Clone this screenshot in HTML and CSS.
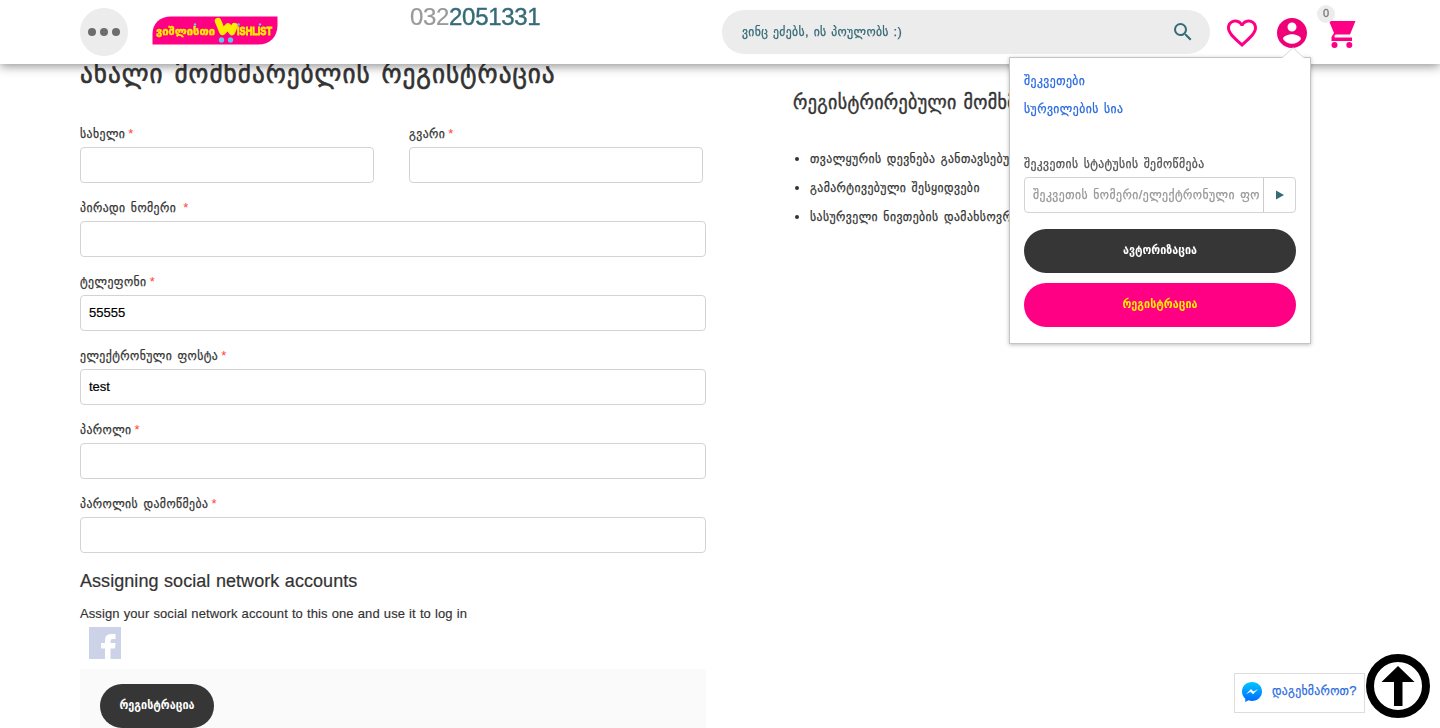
FILE: index.html
```
<!DOCTYPE html>
<html lang="ka">
<head>
<meta charset="utf-8">
<title>რეგისტრაცია</title>
<link rel="stylesheet" href="styles.css">
</head>
<body>
<header class="header">
  <button class="menu" aria-label="menu"><i></i><i></i><i></i></button>
  <svg class="logo" width="126" height="30" viewBox="0 0 126 30">
    <path d="M.5 28.500V18C.5 7 8 .5 19 .5H125.500V9C125.500 21 118 28.500 106 28.500Z" fill="#ff0084"/>
    <g fill="#ffed00" stroke="#ffed00" stroke-width=".4" font-weight="700">
      <text class="logo-ka" x="4" y="18.500" textLength="59" lengthAdjust="spacingAndGlyphs">ვიშლისთი</text>
      <text class="logo-en" x="85" y="18.500" textLength="35" lengthAdjust="spacingAndGlyphs">ISHLIST</text>
    </g>
    <path d="M66 5L70.500 16L76 10.500L80 16L82.500 10" fill="none" stroke="#ffed00" stroke-width="6.500" stroke-linecap="round" stroke-linejoin="round"/>
    <g fill="#5bc8ee"><circle cx="69.500" cy="24" r="2.700"/><circle cx="78.500" cy="24" r="2.700"/><circle cx="43" cy="8.500" r="1.200"/><circle cx="86.500" cy="8.500" r="1.300"/><circle cx="108" cy="8.500" r="1.200"/></g>
  </svg>
  <div class="phone"><span>032</span>2051331</div>
  <div class="search"><span class="geo t-search">ვინც ეძებს, ის პოულობს :)</span>
    <svg width="24" height="24" viewBox="0 0 24 24" fill="#356b76"><path d="M15.500 14h-.790l-.280-.270A6.471 6.471 0 0 0 16 9.500 6.500 6.500 0 1 0 9.500 16c1.610 0 3.090-.590 4.230-1.570l.270.280v.790l5 4.990L20.490 19l-4.990-5zm-6 0C7.010 14 5 11.990 5 9.500S7.010 5 9.500 5 14 7.010 14 9.500 11.990 14 9.500 14z"/></svg>
  </div>
  <svg class="heart" width="36" height="36" viewBox="0 0 24 24" fill="#ff0084"><path d="M16.500 3c-1.740 0-3.410.810-4.500 2.090C10.910 3.810 9.240 3 7.500 3 4.420 3 2 5.420 2 8.500c0 3.780 3.400 6.860 8.550 11.540L12 21.350l1.450-1.320C18.600 15.360 22 12.280 22 8.500 22 5.420 19.580 3 16.500 3zm-4.400 15.550l-.100.100-.100-.100C7.140 14.240 4 11.390 4 8.500 4 6.500 5.500 5 7.500 5c1.540 0 3.040.990 3.570 2.360h1.870C13.460 5.990 14.960 5 16.500 5c2 0 3.500 1.500 3.500 3.500 0 2.890-3.140 5.740-7.900 10.050z"/></svg>
  <svg class="user" width="36" height="36" viewBox="0 0 24 24" fill="#f00078"><path d="M12 2C6.480 2 2 6.480 2 12s4.480 10 10 10 10-4.480 10-10S17.520 2 12 2zm0 3c1.660 0 3 1.340 3 3s-1.340 3-3 3-3-1.340-3-3 1.340-3 3-3zm0 14.200c-2.500 0-4.710-1.280-6-3.220.030-1.990 4-3.080 6-3.080 1.990 0 5.970 1.090 6 3.080-1.290 1.940-3.500 3.220-6 3.220z"/></svg>
  <div class="cart">
    <svg width="28" height="28" viewBox="0 0 28 28"><path d="M1 1H27.500L22 14.500H7.500L6.500 17.500H24V21H3.500V17L6 13Z" fill="#ff0084"/><path d="M6.500 15.900H22" stroke="#fff" stroke-width="1.400"/><circle cx="6.500" cy="25" r="3" fill="#ff0084"/><circle cx="21.300" cy="25" r="3" fill="#ff0084"/></svg>
    <span class="badge">0</span>
  </div>
</header>

<main class="page">
  <form class="form">
    <h1 class="title">ახალი მომხმარებლის რეგისტრაცია</h1>
    <div class="row">
      <div class="field"><label><span class="geo">სახელი</span><b>*</b></label><input type="text"></div>
      <div class="field"><label><span class="geo">გვარი</span><b>*</b></label><input type="text"></div>
    </div>
    <div class="field"><label><span class="geo">პირადი ნომერი</span><b class="far">*</b></label><input type="text"></div>
    <div class="field"><label><span class="geo">ტელეფონი</span><b>*</b></label><input type="text" value="55555"></div>
    <div class="field"><label><span class="geo">ელექტრონული ფოსტა</span><b>*</b></label><input type="text" value="test"></div>
    <div class="field"><label><span class="geo">პაროლი</span><b>*</b></label><input type="password"></div>
    <div class="field"><label><span class="geo">პაროლის დამოწმება</span><b>*</b></label><input type="password"></div>
    <h2 class="social-title">Assigning social network accounts</h2>
    <p class="social-text">Assign your social network account to this one and use it to log in</p>
    <svg class="facebook" width="32" height="32" viewBox="0 0 32 32"><path d="M0 0H32V32H0Z" fill="#ccd3e9"/><path d="M16 32V21.500H12V16H16V13Q16 7 22 7H26.500V12H23.500Q21.500 12 21.500 14V16H26.500L26 21.500H21.500V32Z" fill="#fff"/></svg>
    <div class="actions"><button class="btn submit" type="button">რეგისტრაცია</button></div>
  </form>
  <aside class="benefits">
    <h2>რეგისტრირებული მომხმარებელი</h2>
    <ul class="geo">
      <li>თვალყურის დევნება განთავსებული</li>
      <li>გამარტივებული შესყიდვები</li>
      <li>სასურველი ნივთების დამახსოვრება</li>
    </ul>
  </aside>
</main>

<div class="popup">
  <svg class="tip" width="22" height="11" viewBox="0 0 22 11"><path d="M0 11L11 .7L22 11" fill="#fff" stroke="#d5d5d5"/></svg>
  <a class="geo">შეკვეთები</a>
  <a class="geo">სურვილების სია</a>
  <p class="geo status">შეკვეთის სტატუსის შემოწმება</p>
  <div class="track">
    <div class="geo track-text">შეკვეთის ნომერი/ელექტრონული ფო</div>
    <button type="button" aria-label="go"><svg width="8" height="10" viewBox="0 0 8 10"><path d="M0 .5L8 5L0 9.500Z" fill="#356b76"/></svg></button>
  </div>
  <button class="btn" type="button">ავტორიზაცია</button>
  <button class="btn pink" type="button">რეგისტრაცია</button>
</div>

<a class="help">
  <svg width="20" height="20" viewBox="0 0 20 20"><defs><linearGradient id="m" x2="0" y2="1"><stop stop-color="#00c6ff"/><stop offset="1" stop-color="#0068ff"/></linearGradient></defs><path d="M10 0C4.400 0 0 4.100 0 9.400C0 12.400 1.300 14.900 3.300 16.700V20L6.500 18.300Q8.200 18.900 10 18.900C15.600 18.900 20 14.700 20 9.400C20 4.100 15.600 0 10 0Z" fill="url(#m)"/><path d="M4 12.200L9 7L11.500 9.600L16 7L11 12.300L8.500 9.700Z" fill="#fff"/></svg>
  <span class="geo">დაგეხმაროთ?</span>
</a>
<svg class="to-top" width="64" height="64" viewBox="0 0 64 64"><circle cx="32" cy="32" r="28" fill="#fff" stroke="#000" stroke-width="8"/><path d="M32 12L48.500 28H36.500V52H28V28H15.500Z"/></svg>
</body>
</html>
```
FILE: styles.css
```
* { box-sizing: border-box; }
html, body { height: 100%; overflow: hidden; }
body { margin: 0; background: #fff; color: #333; font-family: "Liberation Sans", "DejaVu Sans Condensed", "DejaVu Sans", sans-serif; font-size: 13px; }
button { font-family: inherit; border: 0; padding: 0; margin: 0; }
svg { display: block; flex: none; }
h1, h2, p, ul { margin: 0; padding: 0; font-weight: 400; }
.geo { letter-spacing: .45px; word-spacing: 1.2px; -webkit-text-stroke: .25px currentColor; }

.header { position: fixed; z-index: 2; top: 0; left: 0; width: 1440px; height: 64px; padding-left: 80px; display: flex; align-items: flex-start; background: #fff; box-shadow: 0 2px 10px rgba(0,0,0,.45); }
.menu { width: 48px; height: 48px; margin-top: 8px; border-radius: 50%; background: #ececec; display: flex; align-items: center; justify-content: center; gap: 4px; }
.menu i { width: 8px; height: 8px; border-radius: 50%; background: #6d6d6d; }
.logo { margin: 16px 0 0 24px; }
.logo-ka { font: 700 11px "DejaVu Sans", sans-serif; }
.logo-en { font: 700 11px "Liberation Sans", sans-serif; stroke-width: .8px; }
.phone { width: 313px; margin: 3px 0 0 131px; padding-left: 1px; font-size: 24px; line-height: 28px; letter-spacing: -.32px; color: #356b76; -webkit-text-stroke: .4px #356b76; }
.phone span { color: #999; -webkit-text-stroke: .2px #999; }
.search { width: 488px; height: 44px; margin-top: 10px; padding: 0 15px 0 20px; border-radius: 22px; background: #ececec; color: #356b76; display: flex; align-items: center; justify-content: space-between; }
.t-search { white-space: nowrap; padding-bottom: 2px; word-spacing: .8px; letter-spacing: .35px; }
.heart { margin: 15px 0 0 14px; }
.user { margin: 15px 0 0 14px; }
.cart { position: relative; margin: 20px 0 0 18px; }
.badge { position: absolute; left: -11px; top: -15px; width: 18px; height: 18px; border-radius: 50%; background: #ececec; color: #777; font-size: 11px; line-height: 17px; text-align: center; -webkit-text-stroke: .3px #777; }

.page { display: flex; padding: 54px 0 0 80px; }
.form { width: 626px; flex: none; }
.title { height: 70px; font-size: 28px; line-height: 40px; letter-spacing: 1px; word-spacing: 2px; white-space: nowrap; -webkit-text-stroke: .6px #333; }
.row { display: flex; gap: 35px; }
.row .field { width: 294px; }
.field { height: 74px; }
label { display: flex; align-items: center; gap: 3px; height: 23px; padding-bottom: 5px; white-space: nowrap; }
label b { color: #f43; font-weight: 400; }
label .far { margin-left: 4px; }
input { display: block; width: 100%; height: 36px; padding: 0 8px 2px; border: 1px solid #d3d3d3; border-radius: 4px; outline: 0; color: #000; font: 13px "Liberation Sans", sans-serif; -webkit-text-stroke: .2px #000; }
.social-title { padding-top: 1px; font-size: 18px; line-height: 24px; letter-spacing: .05px; word-spacing: .5px; -webkit-text-stroke: .2px #333; }
.social-text { margin-top: 12px; line-height: 18px; letter-spacing: .1px; word-spacing: .35px; -webkit-text-stroke: .15px #333; }
.facebook { margin: 4px 0 10px 9px; }
.actions { height: 90px; padding: 15px 20px; background: #fafafa; }
.btn { display: block; width: 272px; height: 44px; padding-bottom: 2px; border-radius: 22px; background: #363636; color: #fff; font-size: 12px; font-weight: 700; white-space: nowrap; }
.submit { width: 114px; }
.benefits { margin: 36px 0 0 87px; width: 560px; white-space: nowrap; }
.benefits h2 { height: 54px; font-size: 20px; line-height: 24px; letter-spacing: .35px; word-spacing: 1px; -webkit-text-stroke: .4px #333; }
.benefits ul { padding-left: 17px; }
.benefits li { height: 29px; line-height: 29px; }

.popup { position: absolute; z-index: 3; left: 1009px; top: 57px; width: 302px; height: 287px; padding: 9px 14px; background: #fff; border: 1px solid #c4c4c4; box-shadow: 0 1px 4px rgba(0,0,0,.25); }
.tip { position: absolute; right: 6px; top: -11px; }
.popup a { display: block; height: 28px; line-height: 28px; color: #2a6ae0; }
.status { margin-top: 31px; height: 23px; line-height: 20px; letter-spacing: .38px; color: #555; white-space: nowrap; }
.track { display: flex; height: 36px; margin-bottom: 16px; border: 1px solid #d3d3d3; border-radius: 4px; }
.track-text { width: 238px; padding-left: 8px; line-height: 33px; letter-spacing: .45px; color: #999; white-space: nowrap; }
.track button { width: 32px; margin-left: auto; border-left: 1px solid #ccc; background: none; padding-left: 12px; }
.pink { margin-top: 10px; background: #ff0084; color: #ffed00; }

.help { position: fixed; left: 1234px; top: 673px; width: 131px; height: 40px; display: flex; align-items: center; gap: 10px; padding: 0 7px; border: 1px solid #ddd; background: #fff; color: #2a6ae0; white-space: nowrap; }
.help span { padding-bottom: 5px; letter-spacing: .3px; }
.help svg { margin-top: -3px; }
.to-top { position: fixed; left: 1366px; top: 654px; }
```
